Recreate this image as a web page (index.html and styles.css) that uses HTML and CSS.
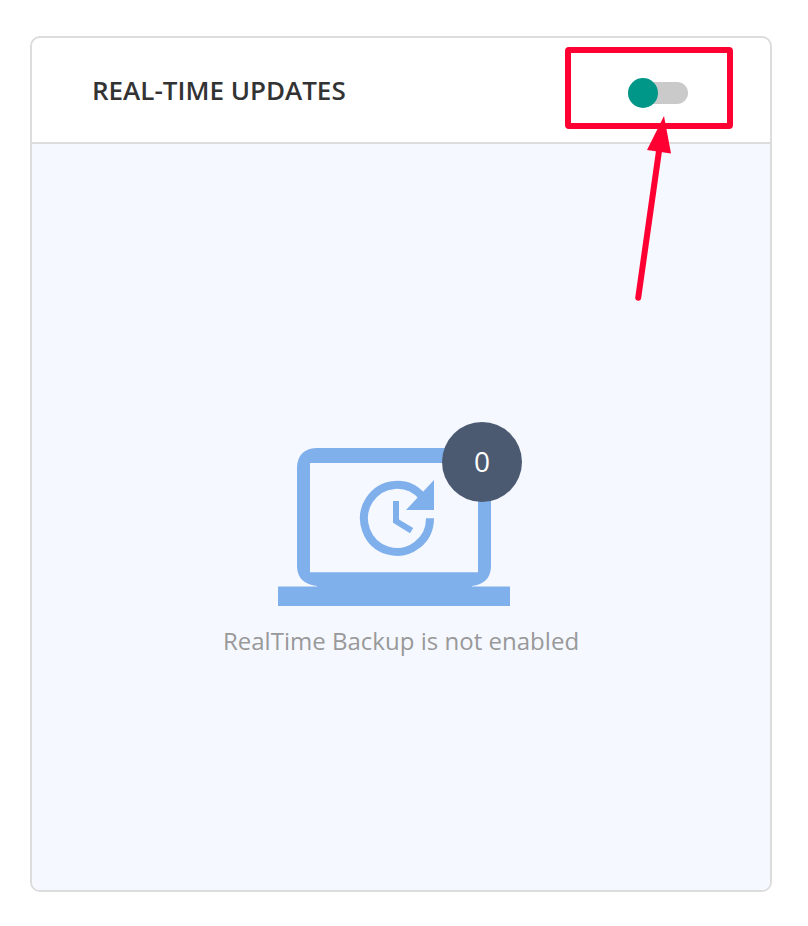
FILE: index.html
```html
<!DOCTYPE html>
<html lang="en">

<head>
    <meta charset="UTF-8" />
    <meta name="viewport" content="width=device-width, initial-scale=1.0" />
    <title>Real-Time Updates</title>
    <link rel="stylesheet" href="styles.css">
</head>

<body>
    <div class="card">
        <div class="card-header">
            <h2>REAL-TIME UPDATES</h2>
            <label class="switch">
                <input type="checkbox" id="realtime-toggle" />
                <span class="track"></span>
                <span class="knob"></span>
            </label>
        </div>

        <div class="card-body">
            <div class="backup-icon">
                <svg width="232" height="158" viewBox="0 0 232 158">
                    <!-- Laptop -->
                    <path fill-rule="evenodd" d="M38 0H194Q213 1 213 19V119Q212 136 194 138V138.400H232V158H0V138.400H39V138Q20 136 19 119V19Q20 1 38 0ZM32 15V124.200H200V15Z" />
                    <!-- Clock with refresh arrow -->
                    <path class="ring" d="M152 70.300A33 33.500 0 1 1 144 48.500" />
                    <path d="M156 32V62H128Z" />
                    <path d="M115 53H121V71.500L135.200 80L132 85.300L115 74.800Z" />
                </svg>
                <span class="badge">0</span>
            </div>
            <p>RealTime Backup is not enabled</p>
        </div>
    </div>

    <!-- Callout around the switch -->
    <svg class="callout" width="168" height="256" viewBox="0 0 168 256">
        <rect x="3" y="3" width="162" height="76" rx="1" />
        <path class="shaft" d="M73.200 250.800L94 104" />
        <path class="head" d="M99 69L106 106.500L82 103Z" />
    </svg>
</body>

</html>
```

FILE: styles.css
```css
* {
    box-sizing: border-box;
}

body {
    margin: 0;
    padding: 36px 36px 34px 30px;
    height: 926px;
    background: white;
    font-family: "Open Sans", sans-serif;
}

.card {
    display: flex;
    flex-direction: column;
    height: 856px;
    border: 2px solid #dcdcdc;
    border-radius: 10px;
    overflow: hidden;
}

.card-header {
    display: flex;
    justify-content: space-between;
    align-items: center;
    height: 106px;
    padding: 6px 82px 0 60px;
    border-bottom: 2px solid #dcdcdc;
}

h2 {
    margin: 0 0 6px;
    font-size: 26px;
    font-weight: 600;
    color: #333;
    white-space: nowrap;
}

.switch {
    position: relative;
    width: 60px;
    height: 30px;
    padding: 4px 0;
    cursor: pointer;
}

.switch input {
    display: none;
}

.track {
    display: block;
    height: 22px;
    border-radius: 11px;
    background: #cacaca;
}

.knob {
    position: absolute;
    left: 0;
    top: 0;
    width: 30px;
    height: 30px;
    border-radius: 50%;
    background: #009688;
}

.card-body {
    flex: 1;
    display: flex;
    flex-direction: column;
    align-items: center;
    padding-top: 304px;
    background: #f5f8ff;
}

.backup-icon {
    position: relative;
    width: 232px;
    height: 158px;
    margin-right: 14px;
}

.backup-icon svg {
    display: block;
    fill: #80b0eb;
}

.backup-icon .ring {
    fill: none;
    stroke: #80b0eb;
    stroke-width: 8;
}

.badge {
    position: absolute;
    left: 164px;
    top: -26px;
    width: 80px;
    height: 80px;
    border-radius: 50%;
    background: #4c5a71;
    color: white;
    font-size: 28px;
    line-height: 78px;
    text-align: center;
}

.card-body p {
    margin: 18px 0 0;
    font-size: 24px;
    line-height: 33px;
    letter-spacing: 0.02px;
    color: #999;
    white-space: nowrap;
}

.callout {
    position: absolute;
    left: 565px;
    top: 47px;
    pointer-events: none;
    fill: none;
    stroke: #ff0033;
    stroke-width: 6;
    stroke-linejoin: round;
    stroke-linecap: round;
}

.callout .head {
    fill: #ff0033;
    stroke: none;
}
```
